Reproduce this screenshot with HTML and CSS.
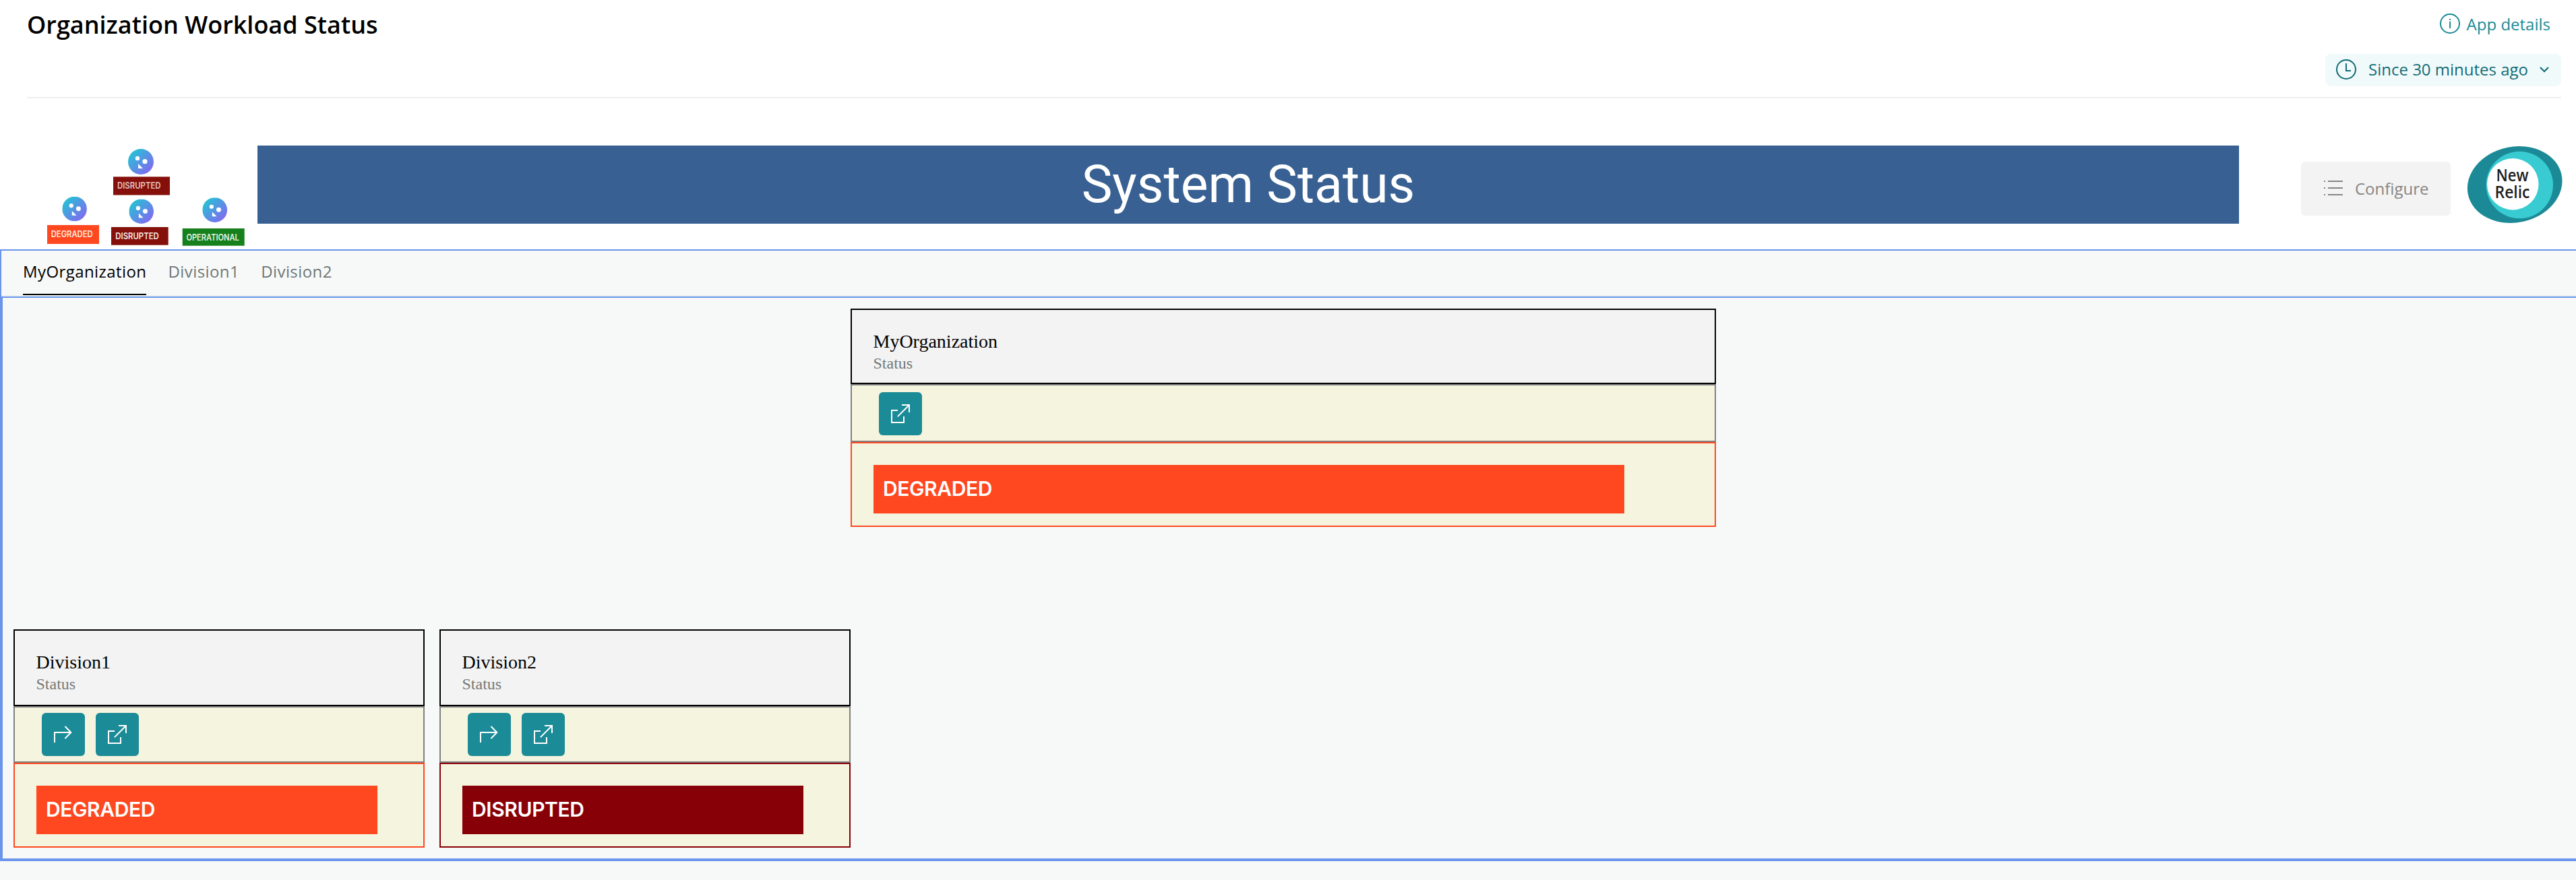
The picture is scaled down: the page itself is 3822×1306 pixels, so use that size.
FILE: index.html
```html
<!DOCTYPE html>
<html lang="en">
<head>
<meta charset="utf-8">
<title>Organization Workload Status</title>
<link rel="stylesheet" href="styles.css">
</head>
<body>
<svg class="defs" aria-hidden="true">
  <defs>
    <linearGradient id="face" x1="0" y1="0" x2="1" y2="1">
      <stop offset="0.1" stop-color="#22c4d4"/><stop offset="0.9" stop-color="#8467f2"/>
    </linearGradient>
    <symbol id="bot" viewBox="0 0 38 38">
      <circle cx="19" cy="19" r="19" fill="url(#face)"/>
      <circle cx="14" cy="14" r="3.2" fill="#fff"/>
      <circle cx="25" cy="18.7" r="3.6" fill="#fff"/>
      <path d="M15 22V29H22Z" fill="#fff"/>
    </symbol>
    <symbol id="open" viewBox="0 0 64 64">
      <path d="M28 27H19V45H37V36M34 19H45V30" fill="none" stroke="#fff" stroke-width="2"/>
      <path d="M28.4 35.6L45 19" fill="none" stroke="#fff" stroke-width="2" stroke-linecap="round"/>
    </symbol>
    <symbol id="branch" viewBox="0 0 64 64">
      <path d="M19 44V29H43" fill="none" stroke="#fff" stroke-width="2"/>
      <path d="M35 20.5L43.3 29L35 37.5" fill="none" stroke="#fff" stroke-width="2" stroke-linecap="round"/>
    </symbol>
  </defs>
</svg>

<header class="header">
  <h1 class="title">Organization Workload Status</h1>
  <div class="header-actions">
    <a class="details">
      <svg width="30" height="30" viewBox="0 0 30 30"><circle cx="15" cy="15" r="14" fill="none" stroke="currentColor" stroke-width="2"/><path d="M15 12V22M15 8V10" stroke="currentColor" stroke-width="2"/></svg>
      <span>App details</span>
    </a>
    <div class="time">
      <svg width="30" height="30" viewBox="0 0 30 30"><circle cx="15" cy="15" r="14" fill="none" stroke="currentColor" stroke-width="2"/><path d="M15 6V17H22" fill="none" stroke="currentColor" stroke-width="2"/></svg>
      <span class="time-label">Since 30 minutes ago</span>
      <svg width="16" height="10" viewBox="0 0 16 10"><path d="M2 2L8 8L14 2" fill="none" stroke="currentColor" stroke-width="2.2"/></svg>
    </div>
  </div>
</header>

<div class="hero">
  <svg class="tree" width="342" height="154" viewBox="40 216 342 154">
    <use href="#bot" x="190" y="221" width="38" height="38"/>
    <use href="#bot" x="92.3" y="291.7" width="36.6" height="36.6"/>
    <use href="#bot" x="191.4" y="295.4" width="36.6" height="36.6"/>
    <use href="#bot" x="300.3" y="293.2" width="36.8" height="36.8"/>
    <rect x="168" y="262.3" width="84" height="27.2" fill="#85100b"/>
    <rect x="70" y="334" width="77" height="28" fill="#ff4820"/>
    <rect x="165" y="337" width="84.7" height="26.7" fill="#85100b"/>
    <rect x="270.7" y="339" width="92" height="25.7" fill="#15801c"/>
    <g class="tree-label">
      <text x="174" y="280.4" textLength="64.5" lengthAdjust="spacingAndGlyphs" fill="#e3c4c3">DISRUPTED</text>
      <text x="75.7" y="351.9" textLength="62" lengthAdjust="spacingAndGlyphs" fill="#ffe6df">DEGRADED</text>
      <text x="171.3" y="354.6" textLength="64.5" lengthAdjust="spacingAndGlyphs" fill="#f5e9e8">DISRUPTED</text>
      <text x="276.4" y="357.4" textLength="78.5" lengthAdjust="spacingAndGlyphs" fill="#e4f2e5">OPERATIONAL</text>
    </g>
  </svg>
  <div class="banner">System Status</div>
  <button class="configure">
    <svg width="28" height="24" viewBox="0 0 28 24"><path d="M0 2H2M6 2H28M0 12H2M6 12H28M0 22H2M6 22H28" stroke="currentColor" stroke-width="2"/></svg>
    <span>Configure</span>
  </button>
  <svg class="logo" width="142" height="116" viewBox="3660 216 142 116">
    <ellipse cx="3731.2" cy="274" rx="70.9" ry="56.2" transform="rotate(-12 3731.2 274)" fill="#1b8a96"/>
    <circle cx="3738.3" cy="274.5" r="49.7" fill="#38cbd2"/>
    <circle cx="3728.3" cy="273.3" r="38.2" fill="#fff"/>
    <g class="logo-text">
      <text x="3703.5" y="269.3" textLength="48" lengthAdjust="spacingAndGlyphs">New</text>
      <text x="3701.5" y="293.5" textLength="52" lengthAdjust="spacingAndGlyphs">Relic</text>
    </g>
  </svg>
</div>

<main class="workloads">
  <nav class="tabs">
    <a class="tab tab-active">MyOrganization</a>
    <a class="tab">Division1</a>
    <a class="tab">Division2</a>
  </nav>
  <section class="panel">
    <div class="row row-root">
      <article class="card card-wide degraded">
        <div class="card-head"><h2>MyOrganization</h2><p>Status</p></div>
        <div class="card-tools">
          <button class="tool"><svg width="64" height="64"><use href="#open"/></svg></button>
        </div>
        <div class="card-status"><div class="badge">DEGRADED</div></div>
      </article>
    </div>
    <div class="row">
      <article class="card degraded">
        <div class="card-head"><h2>Division1</h2><p>Status</p></div>
        <div class="card-tools">
          <button class="tool"><svg width="64" height="64"><use href="#branch"/></svg></button>
          <button class="tool"><svg width="64" height="64"><use href="#open"/></svg></button>
        </div>
        <div class="card-status"><div class="badge">DEGRADED</div></div>
      </article>
      <article class="card disrupted">
        <div class="card-head"><h2>Division2</h2><p>Status</p></div>
        <div class="card-tools">
          <button class="tool"><svg width="64" height="64"><use href="#branch"/></svg></button>
          <button class="tool"><svg width="64" height="64"><use href="#open"/></svg></button>
        </div>
        <div class="card-status"><div class="badge">DISRUPTED</div></div>
      </article>
    </div>
  </section>
</main>
</body>
</html>
```
FILE: styles.css
```css
* {
  box-sizing: border-box;
}

body {
  margin: 0;
  min-height: 1306px;
  background: #f7f9f8;
  font-family: "Open Sans", sans-serif;
  font-size: 24px;
  color: #000;
}

h1, h2, p {
  margin: 0;
}

svg {
  display: block;
  flex: none;
}

button {
  border: 0;
  padding: 0;
  font: inherit;
}

.defs {
  position: absolute;
  width: 0;
  height: 0;
}

.header {
  display: flex;
  justify-content: space-between;
  height: 146px;
  padding: 12px 0 0;
  margin: 0 22px 0 40px;
  border-bottom: 2px solid #edeeee;
}

body::before {
  content: "";
  position: absolute;
  z-index: -1;
  inset: 0 0 auto;
  height: 370px;
  background: #fff;
}

.title {
  font-size: 36px;
  font-weight: 600;
  line-height: 50px;
  white-space: nowrap;
}

.header-actions {
  display: flex;
  flex-direction: column;
  align-items: flex-end;
  gap: 22px;
}

.details {
  display: flex;
  align-items: center;
  gap: 10px;
  height: 46px;
  padding-right: 16px;
  color: #1b8a96;
}

.time {
  display: flex;
  align-items: center;
  width: 350px;
  height: 48px;
  padding: 0 0 2px 16px;
  border-radius: 8px;
  background: #f1fafb;
  color: #116b75;
}

.time-label {
  width: 238px;
  margin: 0 15px 1px 18px;
  white-space: nowrap;
}

.hero {
  display: flex;
  height: 224px;
  padding: 70px 20px 0 40px;
}

.banner {
  width: 2940px;
  height: 116px;
  background: #386092;
  color: #fff;
  font-family: Roboto, sans-serif;
  font-size: 77px;
  line-height: 116px;
  text-align: center;
}

.configure {
  display: flex;
  align-items: center;
  gap: 18px;
  width: 222px;
  height: 80px;
  margin: 24px 24px 0 92px;
  padding: 0 0 2px 34px;
  border-radius: 6px;
  background: #f3f3f3;
  color: #858585;
}

.tree-label {
  font: 600 12.5px Inter, sans-serif;
}

.logo-text {
  font: 600 25px "Open Sans", sans-serif;
  fill: #1d1d1d;
}

.workloads {
  height: 908px;
  border: 2px solid #6995ea;
  border-right: 0;
}

.tabs {
  display: flex;
  gap: 32px;
  height: 68px;
  padding-left: 32px;
  border-bottom: 2px solid #edeff0;
}

.tab {
  height: 66px;
  line-height: 62px;
  letter-spacing: 0.42px;
  color: #6f7777;
}

.tab-active {
  color: #000;
  border-bottom: 2px solid #000;
}

.panel {
  height: 836px;
  padding: 16px;
  border: 2px solid #6995ea;
  border-right: 0;
}

.row {
  display: flex;
  gap: 22px;
}

.row-root {
  height: 476px;
  padding-left: 1242px;
}

.card {
  width: 610px;
  font-family: "Liberation Serif", serif;
}

.card-wide {
  width: 1284px;
}

.card-head {
  height: 114px;
  padding: 30px 32px 0 31.5px;
  border: 2px solid #000;
  background: #f3f3f3;
}

.card-head h2 {
  font-size: 28px;
  font-weight: 400;
  line-height: 33px;
}

.card-head p {
  color: #737979;
  line-height: 32px;
}

.card-tools {
  display: flex;
  align-items: flex-end;
  gap: 16px;
  height: 84px;
  padding: 0 40px 8px;
  border: 2px solid #808080;
  background: #f5f4de;
}

.card-wide .card-head {
  height: 112px;
}

.card-wide .card-tools {
  height: 86px;
}

.tool {
  width: 64px;
  height: 64px;
  border-radius: 6px;
  background: #1b8b97;
}

.card-status {
  height: 126px;
  padding: 32px 68px 0 32px;
  border: 2px solid var(--status);
  background: #f5f4de;
}

.card-wide .card-status {
  padding-right: 134px;
}

.badge {
  height: 72px;
  padding-left: 14px;
  background: var(--status);
  color: #fff;
  font: 600 30px/71px Inter, sans-serif;
  letter-spacing: -0.4px;
}

.degraded {
  --status: #ff4720;
}

.disrupted {
  --status: #880007;
}
```
